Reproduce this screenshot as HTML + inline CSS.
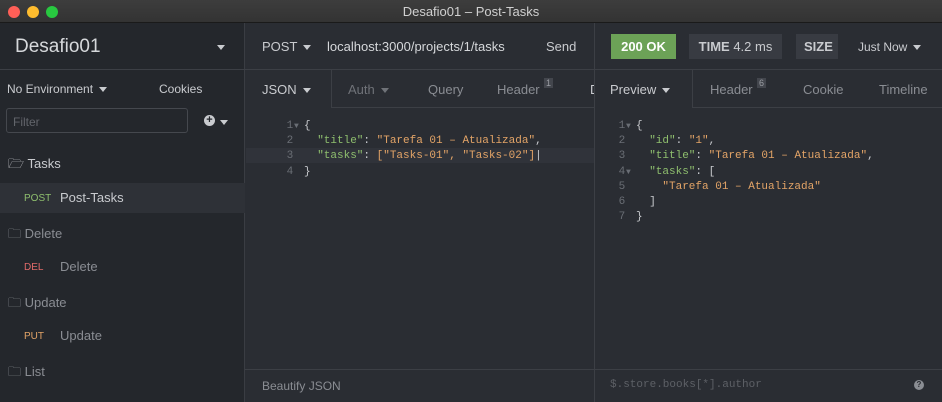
<!DOCTYPE html><html><head><style>
*{box-sizing:border-box;margin:0;padding:0}
body{width:942px;height:402px;overflow:hidden;background:#2a2d33;font-family:"Liberation Sans",sans-serif;color:#c9cbcf;position:relative;font-size:13px}
.a{position:absolute;white-space:nowrap}
.tb{left:0;top:0;width:942px;height:23px;background:linear-gradient(#3d3d3d,#333);border-bottom:1px solid #1a1a1a;text-align:center;line-height:23px;color:#d0d0d0;font-size:13px}
.dot{top:6px;width:12px;height:12px;border-radius:50%}
.sb{left:0;top:23px;width:245px;height:379px;background:#24272c;border-right:1px solid #3a3d43}
.hl{height:1px;background:#3c3f45}
.vl{width:1px;background:#3c3f45}
.tri{display:inline-block;width:0;height:0;border-left:4px solid transparent;border-right:4px solid transparent;border-top:5px solid #c9cbcf;vertical-align:middle;margin-left:6px}
.mono{font-family:"Liberation Mono",monospace;font-size:11px}
.code div{white-space:pre;height:15.2px;line-height:15.2px}
.code .ln{display:inline-block;width:14px;color:#6a6e75}
.code .ar{display:inline-block;width:10px;color:#6a6e75;font-size:8px}
.g{color:#8fbf6e}.o{color:#e3a467}.n{color:#6a6e75}
.dim{color:#8a8d93}
</style></head><body>
<div class="a tb">Desafio01 – Post-Tasks</div>
<div class="a dot" style="left:8px;background:#fe5f57"></div>
<div class="a dot" style="left:27px;background:#febc2e"></div>
<div class="a dot" style="left:46px;background:#28c840"></div>
<div class="a sb"></div>
<div class="a" style="left:15px;top:36px;font-size:19px;color:#d6d8db">Desafio01</div>
<div class="a" style="left:217px;top:45px;width:0;height:0;border-left:4.5px solid transparent;border-right:4.5px solid transparent;border-top:5px solid #c9cbcf"></div>
<div class="a hl" style="left:0;top:69px;width:942px"></div>
<div class="a" style="left:7px;top:82px;font-size:12px">No Environment<span class="tri"></span></div>
<div class="a" style="left:159px;top:82px;font-size:12px">Cookies</div>
<div class="a" style="left:6px;top:108px;width:182px;height:25px;border:1px solid #45484e;border-radius:3px;padding:6px 6px;font-size:12px;color:#62656b">Filter</div>
<div class="a" style="left:204px;top:115px;width:11px;height:11px;border-radius:50%;background:#c9cbcf;color:#24272c;font-size:11px;line-height:11px;text-align:center;font-weight:bold">+</div>
<div class="a" style="left:214px;top:114px"><span class="tri"></span></div>
<div class="a" style="left:8px;top:155px;font-size:13px">🗁 Tasks</div>
<div class="a" style="left:0;top:183px;width:245px;height:30px;background:#2e3137"></div>
<div class="a" style="left:24px;top:193px;font-size:10px;color:#8fbf6e">POST</div>
<div class="a" style="left:60px;top:190px">Post-Tasks</div>
<div class="a dim" style="left:8px;top:225px">🗀 Delete</div>
<div class="a" style="left:24px;top:262px;font-size:10px;color:#e06a6a">DEL</div>
<div class="a dim" style="left:60px;top:259px">Delete</div>
<div class="a dim" style="left:8px;top:294px">🗀 Update</div>
<div class="a" style="left:24px;top:331px;font-size:10px;color:#e3a467">PUT</div>
<div class="a dim" style="left:60px;top:328px">Update</div>
<div class="a dim" style="left:8px;top:363px">🗀 List</div>
<div class="a vl" style="left:594px;top:23px;height:379px"></div>
<div class="a" style="left:262px;top:39px;font-size:13px">POST<span class="tri"></span></div>
<div class="a" style="left:327px;top:39px;font-size:13px;color:#d6d8db">localhost:3000/projects/1/tasks</div>
<div class="a" style="left:546px;top:39px">Send</div>
<div class="a" style="left:611px;top:34px;width:65px;height:25px;background:#6ca257;color:#fff;font-weight:bold;text-align:center;line-height:25px;font-size:13px">200 OK</div>
<div class="a" style="left:689px;top:34px;width:93px;height:25px;background:#383b42;text-align:center;line-height:25px"><b>TIME</b> 4.2 ms</div>
<div class="a" style="left:796px;top:34px;width:42px;height:25px;background:#383b42;line-height:25px;padding-left:8px;overflow:hidden"><b>SIZE</b></div>
<div class="a" style="left:858px;top:40px;font-size:12px">Just Now<span class="tri"></span></div>
<div class="a vl" style="left:331px;top:70px;height:37px"></div>
<div class="a vl" style="left:692px;top:70px;height:37px"></div>
<div class="a hl" style="left:331px;top:107px;width:263px"></div>
<div class="a hl" style="left:692px;top:107px;width:250px"></div>
<div class="a" style="left:262px;top:82px">JSON<span class="tri"></span></div>
<div class="a dim" style="left:348px;top:82px;color:#6f7278">Auth<span class="tri" style="border-top-color:#6f7278"></span></div>
<div class="a dim" style="left:428px;top:82px">Query</div>
<div class="a dim" style="left:497px;top:82px">Header</div>
<div class="a" style="left:544px;top:78px;background:#43464d;font-size:9px;padding:0 2px;color:#9a9da3">1</div>
<div class="a" style="left:590px;top:82px;width:4px;overflow:hidden" >D</div>
<div class="a" style="left:610px;top:82px">Preview<span class="tri"></span></div>
<div class="a dim" style="left:710px;top:82px">Header</div>
<div class="a" style="left:757px;top:78px;background:#43464d;font-size:9px;padding:0 2px;color:#9a9da3">6</div>
<div class="a dim" style="left:803px;top:82px">Cookie</div>
<div class="a dim" style="left:879px;top:82px">Timeline</div>
<div class="a" style="left:246px;top:148px;width:348px;height:15px;background:#30333a"></div>
<div class="a mono code" style="left:280px;top:119px">
<div><span class="ln"> 1</span><span class="ar">▼</span>{</div>
<div><span class="ln"> 2</span><span class="ar"> </span>  <span class="g">"title"</span>: <span class="o">"Tarefa 01 – Atualizada"</span>,</div>
<div><span class="ln"> 3</span><span class="ar"> </span>  <span class="g">"tasks"</span>: <span class="o">["Tasks-01", "Tasks-02"]</span>|</div>
<div><span class="ln"> 4</span><span class="ar"> </span>}</div></div>
<div class="a mono code" style="left:612px;top:119px">
<div><span class="ln"> 1</span><span class="ar">▼</span>{</div>
<div><span class="ln"> 2</span><span class="ar"> </span>  <span class="g">"id"</span>: <span class="o">"1"</span>,</div>
<div><span class="ln"> 3</span><span class="ar"> </span>  <span class="g">"title"</span>: <span class="o">"Tarefa 01 – Atualizada"</span>,</div>
<div><span class="ln"> 4</span><span class="ar">▼</span>  <span class="g">"tasks"</span>: [</div>
<div><span class="ln"> 5</span><span class="ar"> </span>    <span class="o">"Tarefa 01 – Atualizada"</span></div>
<div><span class="ln"> 6</span><span class="ar"> </span>  ]</div>
<div><span class="ln"> 7</span><span class="ar"> </span>}</div></div>
<div class="a hl" style="left:245px;top:369px;width:697px"></div>
<div class="a" style="left:262px;top:379px;font-size:12px;color:#8a8d93">Beautify JSON</div>
<div class="a mono" style="left:610px;top:379px;color:#5d6066">$.store.books[*].author</div>
<div class="a" style="left:914px;top:380px;width:10px;height:10px;border-radius:50%;background:#8a8d93;color:#2a2d33;font-size:8px;text-align:center;line-height:10px;font-weight:bold">?</div>
</body></html>
